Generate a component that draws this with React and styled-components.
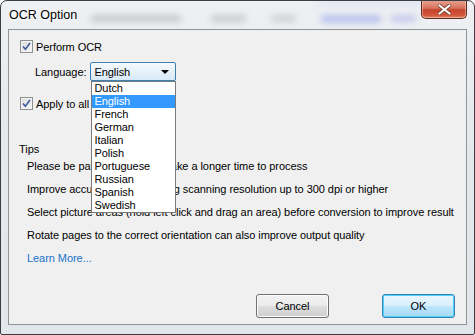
import React from 'react';
import styled, { createGlobalStyle } from 'styled-components';

const GlobalStyle = createGlobalStyle`
  html, body {
    margin: 0;
    padding: 0;
    background: #ffffff;
  }
`;

const Window = styled.div`
  position: relative;
  box-sizing: border-box;
  width: 475px;
  height: 335px;
  display: flex;
  flex-direction: column;
  padding: 0 7px 9px 7px;
  border: 1px solid #3a3d42;
  border-radius: 7px 7px 2px 2px;
  background: linear-gradient(180deg, #eef0f3 0%, #e6e9ec 40%, #e3e6ea 100%);
  overflow: hidden;
  font-family: "Liberation Sans", Arial, sans-serif;
`;

const Blur = styled.div`
  position: absolute;
  top: ${(p) => p.top}px;
  left: ${(p) => p.left}px;
  width: ${(p) => p.w}px;
  height: ${(p) => p.h}px;
  background: ${(p) => p.color};
  filter: blur(3px);
  border-radius: 3px;
`;

const TitleBar = styled.div`
  position: relative;
  height: 28px;
  display: flex;
  justify-content: space-between;
  align-items: flex-start;
`;

const Title = styled.span`
  margin-top: 7px;
  margin-left: 1px;
  font-size: 12.5px;
  color: #000;
  text-shadow: 0 0 6px #fff, 0 0 3px #fff;
`;

const CloseButton = styled.div`
  width: 46px;
  height: 19px;
  box-sizing: border-box;
  margin-top: -1px;
  border: 1px solid #5f2a22;
  border-top: none;
  border-radius: 0 0 5px 5px;
  background: linear-gradient(180deg, #e8a493 0%, #d7745e 45%, #c7442c 55%, #d2573c 85%, #e08a6c 100%);
  box-shadow: inset 0 0 0 1px rgba(255, 220, 210, 0.45);
  display: flex;
  align-items: center;
  justify-content: center;
`;

const Client = styled.div`
  position: relative;
  flex: 1;
  display: flex;
  flex-direction: column;
  border: 1px solid #8f9499;
  background: #f0f0f0;
  padding: 10px 11px 6px 10px;
  font-size: 11px;
  letter-spacing: -0.06px;
  color: #000;
`;

const CheckRow = styled.div`
  display: flex;
  align-items: center;
  gap: 3px;
  height: 13px;
  margin: ${(p) => p.mt || 0}px 0 0 1px;
`;

const Box = styled.div`
  box-sizing: border-box;
  width: 13px;
  height: 13px;
  border: 1px solid #8e8f8f;
  background: linear-gradient(135deg, #dcdcdc 0%, #f6f6f6 100%);
  box-shadow: inset 0 0 0 1px #f4f4f4;
  display: flex;
  align-items: center;
  justify-content: center;
`;

const LangRow = styled.div`
  display: flex;
  align-items: center;
  gap: 4px;
  margin: 9px 0 0 16px;
  height: 19px;
`;

const Select = styled.div`
  position: relative;
  box-sizing: border-box;
  width: 86px;
  height: 19px;
  border: 1px solid #3c7fb1;
  border-radius: 2px;
  background: linear-gradient(180deg, #f5fafd 0%, #e6f1f9 50%, #d8eaf7 100%);
  display: flex;
  align-items: center;
  padding-left: 3px;
`;

const Arrow = styled.div`
  position: absolute;
  right: 6px;
  top: 7px;
  width: 0;
  height: 0;
  border-left: 4px solid transparent;
  border-right: 4px solid transparent;
  border-top: 4px solid #000;
`;

const List = styled.div`
  position: absolute;
  top: 18px;
  left: 0;
  z-index: 5;
  box-sizing: border-box;
  width: 85px;
  border: 1px solid #7a7a7a;
  background: #fff;
`;

const Item = styled.div`
  height: 13px;
  line-height: 13px;
  padding-left: 2px;
  background: ${(p) => (p.active ? '#3399ff' : 'transparent')};
  color: ${(p) => (p.active ? '#fff' : '#000')};
`;

const Heading = styled.div`
  margin-top: 33px;
  height: 13px;
  line-height: 13px;
`;

const Tips = styled.div`
  display: flex;
  flex-direction: column;
  gap: 10px;
  margin: 4px 0 0 8px;
`;

const Tip = styled.div`
  height: 13px;
  line-height: 13px;
  white-space: nowrap;
`;

const LearnMore = styled.a`
  margin: 10px 0 0 8px;
  height: 13px;
  line-height: 13px;
  color: #1a73cc;
  text-decoration: none;
`;

const Footer = styled.div`
  margin-top: auto;
  display: flex;
  justify-content: flex-end;
  gap: 53px;
`;

const Button = styled.div`
  box-sizing: border-box;
  width: 73px;
  height: 24px;
  border: 1px solid ${(p) => (p.primary ? '#3c7fb1' : '#707070')};
  border-radius: 3px;
  background: ${(p) =>
    p.primary
      ? 'linear-gradient(180deg, #eaf6fd 0%, #d9f0fc 48%, #bee6fd 52%, #a7d9f5 100%)'
      : 'linear-gradient(180deg, #f2f2f2 0%, #ebebeb 48%, #dddddd 52%, #cfcfcf 100%)'};
  box-shadow: inset 0 0 0 1px ${(p) => (p.primary ? '#48d3fb' : '#fcfcfc')};
  display: flex;
  align-items: center;
  justify-content: center;
`;

const languages = ['Dutch', 'English', 'French', 'German', 'Italian', 'Polish', 'Portuguese', 'Russian', 'Spanish', 'Swedish'];

const tips = [
  'Please be patient, OCR may take a longer time to process',
  'Improve accuracy by increasing scanning resolution up to 300 dpi or higher',
  'Select picture areas (hold left click and drag an area) before conversion to improve result',
  'Rotate pages to the correct orientation can also improve output quality',
];

function Check() {
  return (
    <Box>
      <svg width="9" height="9" viewBox="0 0 9 9">
        <path d="M1 4.5 L3.4 7.2 L8 1" fill="none" stroke="#3e5aa0" strokeWidth="1.6" />
      </svg>
    </Box>
  );
}

export default function App() {
  return (
    <>
      <GlobalStyle />
      <Window>
        <Blur top={14} left={90} w={90} h={7} color="#c7c9cc" />
        <Blur top={14} left={210} w={35} h={7} color="#c9cbce" />
        <Blur top={14} left={270} w={25} h={7} color="#cfd1d3" />
        <Blur top={14} left={320} w={60} h={8} color="#b9c2ef" />
        <Blur top={14} left={390} w={25} h={7} color="#c4caee" />
        <Blur top={0} left={315} w={110} h={4} color="#dde0f6" />
        <TitleBar>
          <Title>OCR Option</Title>
          <CloseButton>
            <svg width="13" height="11" viewBox="0 0 13 11">
              <path
                d="M1.5 1.5 L11.5 9.5 M11.5 1.5 L1.5 9.5"
                stroke="#7a3a30"
                strokeWidth="3.6"
                strokeLinecap="round"
              />
              <path
                d="M1.5 1.5 L11.5 9.5 M11.5 1.5 L1.5 9.5"
                stroke="#ffffff"
                strokeWidth="2.2"
                strokeLinecap="round"
              />
            </svg>
          </CloseButton>
        </TitleBar>
        <Client>
          <CheckRow>
            <Check />
            <span>Perform OCR</span>
          </CheckRow>
          <LangRow>
            <span>Language:</span>
            <Select>
              English
              <Arrow />
              <List>
                {languages.map((l) => (
                  <Item key={l} active={l === 'English'}>
                    {l}
                  </Item>
                ))}
              </List>
            </Select>
          </LangRow>
          <CheckRow mt={16}>
            <Check />
            <span>Apply to all pages</span>
          </CheckRow>
          <Heading>Tips</Heading>
          <Tips>
            {tips.map((t) => (
              <Tip key={t}>{t}</Tip>
            ))}
          </Tips>
          <LearnMore href="#">Learn More...</LearnMore>
          <Footer>
            <Button>Cancel</Button>
            <Button primary>OK</Button>
          </Footer>
        </Client>
      </Window>
    </>
  );
}
